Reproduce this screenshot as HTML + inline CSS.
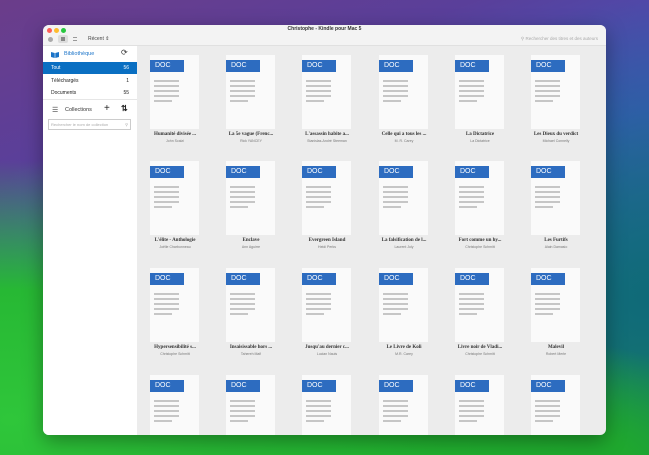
<!DOCTYPE html>
<html><head><meta charset="utf-8"><style>
*{margin:0;padding:0;box-sizing:border-box}
body{width:649px;height:455px;overflow:hidden;position:relative;font-family:"Liberation Sans",sans-serif;
background:
radial-gradient(ellipse 420px 260px at 10px 420px,#2fc63a 0%,#27b834 50%,rgba(39,184,52,0) 100%),
radial-gradient(ellipse 500px 150px at 330px 470px,#22b530 0%,#1fa82e 60%,rgba(31,168,46,0) 100%),
radial-gradient(ellipse 300px 300px at 649px 300px,#0f6a78 0%,rgba(15,106,120,0) 100%),
linear-gradient(160deg,#6b3d8a 0%,#5a3f9a 25%,#3f58c0 50%,#2a6aa0 70%,#1f8a5a 85%,#22a834 100%);}
.win{position:absolute;left:43px;top:25px;width:563px;height:410px;background:#ececec;border-radius:6px;overflow:hidden;box-shadow:0 6px 20px rgba(0,0,0,.35)}
.tb{position:absolute;left:0;top:0;width:100%;height:21px;background:#f3f3f3;border-bottom:1px solid #e0e0e0}
.dot{position:absolute;top:3px;width:5px;height:5px;border-radius:50%}
.title{position:absolute;top:1px;left:0;width:100%;text-align:center;font-size:5px;font-weight:bold;color:#333}
.side{position:absolute;left:0;top:21px;width:94px;bottom:0;background:#fff}
.row{position:absolute;left:0;width:94px;height:12px;font-size:5px;color:#222;line-height:12px;padding:0 8px 0 8px}
.row span{float:right}
.card{position:absolute;width:49px;height:74px;background:#fafafa}
.doc{position:absolute;left:0;top:5px;width:34px;height:12px;background:#2d6cc0;color:#fff;font-size:7px;line-height:12px;padding-left:5px}
.ln{position:absolute;left:4px;height:1.6px;background:#c6c6c6;width:25px}
.t{position:absolute;width:76px;text-align:center;font-family:"Liberation Serif",serif;font-size:5px;font-weight:bold;color:#333;white-space:nowrap}
.a{position:absolute;width:76px;text-align:center;font-size:3.5px;color:#777;white-space:nowrap}
</style></head><body>
<div class="win">
<div class="tb">
<div class="dot" style="left:4px;background:#fe5f57"></div>
<div class="dot" style="left:11px;background:#febc2e"></div>
<div class="dot" style="left:18px;background:#28c840"></div>
<div class="title">Christophe - Kindle pour Mac 5</div>
<div style="position:absolute;left:5px;top:12px;width:5px;height:5px;border-radius:50%;background:#aaa"></div>
<div style="position:absolute;left:15px;top:10px;width:10px;height:8px;border-radius:2px;background:#ddd"></div>
<div style="position:absolute;left:18px;top:12px;width:4px;height:4px;background:#888"></div>
<div style="position:absolute;left:30px;top:12px;width:4px;height:4px;border-top:1px solid #999;border-bottom:1px solid #999"></div>
<div style="position:absolute;left:45px;top:11px;font-size:5px;color:#444">Récent ⇕</div>
<div style="position:absolute;right:8px;top:11px;font-size:4.5px;color:#aaa">⚲ Rechercher des titres et des auteurs</div>
</div>
<div class="side">
<svg style="position:absolute;left:8px;top:5px" width="8" height="7" viewBox="0 0 8 7"><path d="M0 1 L3.7 2 L3.7 7 L0 6Z M8 1 L4.3 2 L4.3 7 L8 6Z" fill="#1a73c8"/></svg>
<div style="position:absolute;left:21px;top:5px;font-size:5.5px;color:#1a73c8">Bibliothèque</div>
<div style="position:absolute;left:78px;top:2px;font-size:8px;color:#333">⟳</div>
<div class="row" style="top:16px;background:#0a6fc2;color:#fff">Tout<span>56</span></div>
<div class="row" style="top:29px">Téléchargés<span>1</span></div>
<div class="row" style="top:41px">Documents<span>55</span></div>
<div style="position:absolute;left:0;top:53px;width:94px;height:1px;background:#e6e6e6"></div>
<div style="position:absolute;left:9px;top:60px;font-size:7px;color:#444">☰</div>
<div style="position:absolute;left:22px;top:61px;font-size:5.5px;color:#333">Collections</div>
<div style="position:absolute;left:61px;top:57px;font-size:10px;color:#222">+</div>
<div style="position:absolute;left:78px;top:58px;font-size:8px;color:#222;font-weight:bold">⇅</div>
<div style="position:absolute;left:5px;top:73px;width:83px;height:11px;border:1px solid #ccc;font-size:4px;color:#aaa;line-height:9px;padding-left:2px">Rechercher le nom de collection<span style="float:right;padding-right:2px">⚲</span></div>
</div>
</div>
<div id="grid"></div>
<script>
var xs=[150,226,302,379,455,531],ys=[55,161,268,375];
var T=[["Humanité divisée ...","John Scalzi"],["La 5e vague (Frenc...","Rick YANCEY"],["L'assassin habite a...","Stanislas-André Steeman"],["Celle qui a tous les ...","M. R. Carey"],["La Dictatrice","La Dictatrice"],["Les Dieux du verdict","Michael Connelly"],
["L'élite - Anthologie","Joëlle Charbonneau"],["Enclave","Ann Aguirre"],["Evergreen Island","Heidi Perks"],["La falsification de l...","Laurent Joly"],["Fort comme un hy...","Christophe Schmitt"],["Les Furtifs","Alain Damasio"],
["Hypersensibilité s...","Christophe Schmitt"],["Insaisissable hors ...","Tahereh Mafi"],["Jusqu'au dernier c...","Lucian Nauis"],["Le Livre de Koli","M.R. Carey"],["Livre noir de Vladi...","Christophe Schmitt"],["Malevil","Robert Merle"]];
var h="";
for(var r=0;r<4;r++)for(var c=0;c<6;c++){var x=xs[c],y=ys[r];
h+='<div class="card" style="left:'+x+'px;top:'+y+'px;height:'+(r==3?435-y:74)+'px"><div class="doc">DOC</div>';
for(var k=0;k<5;k++)h+='<div class="ln" style="top:'+(25+k*5)+'px;'+(k==4?'width:18px':'')+'"></div>';
h+='</div>';
if(r<3){var t=T[r*6+c];h+='<div class="t" style="left:'+(x-13)+'px;top:'+(y+77)+'px">'+t[0]+'</div><div class="a" style="left:'+(x-13)+'px;top:'+(y+84)+'px">'+t[1]+'</div>';}}
document.getElementById("grid").innerHTML=h;
</script>
</body></html>
